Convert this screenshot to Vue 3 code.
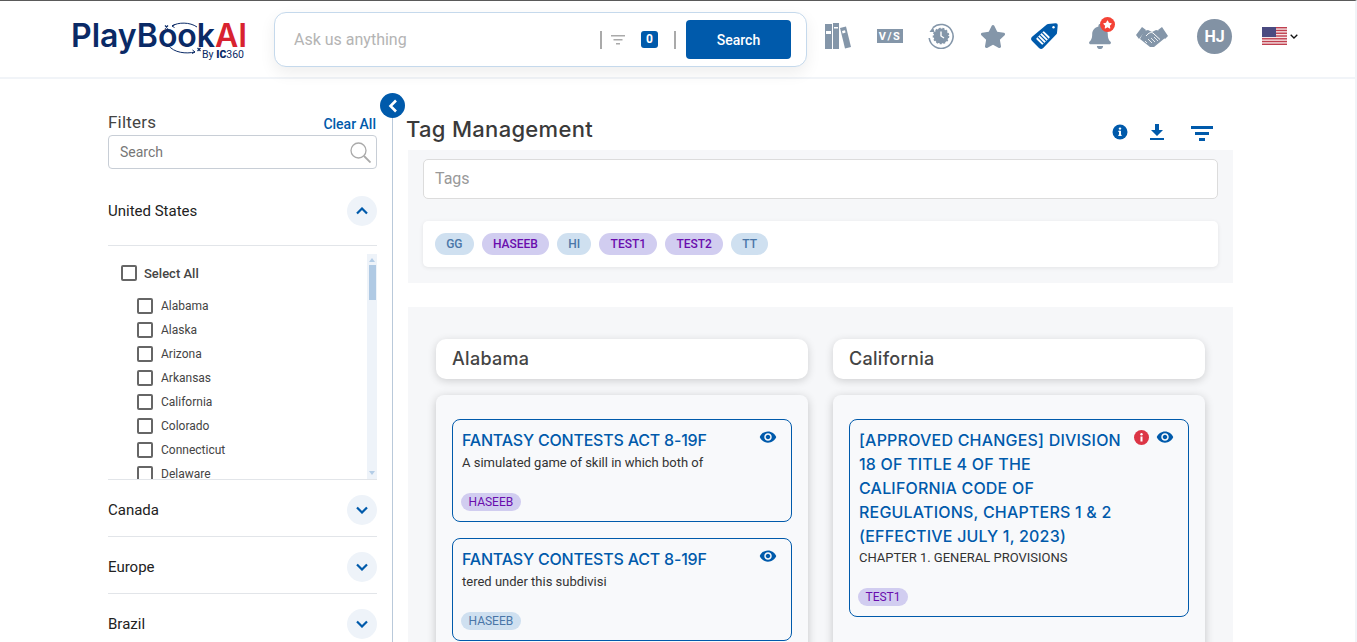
<script setup>
import { ref } from 'vue'

const states = ref(['Alabama', 'Alaska', 'Arizona', 'Arkansas', 'California', 'Colorado', 'Connecticut', 'Delaware'])
const regions = ref(['Canada', 'Europe', 'Brazil'])

const tags = ref([
  { name: 'GG', kind: 'blue' },
  { name: 'HASEEB', kind: 'purple' },
  { name: 'HI', kind: 'blue' },
  { name: 'TEST1', kind: 'purple' },
  { name: 'TEST2', kind: 'purple' },
  { name: 'TT', kind: 'blue' },
])

// === cards per state ===
const columns = ref([
  {
    state: 'Alabama',
    cards: [
      { lines: ['FANTASY CONTESTS ACT 8-19F'], desc: 'A simulated game of skill in which both of', tag: 'HASEEB', kind: 'purple' },
      { lines: ['FANTASY CONTESTS ACT 8-19F'], desc: 'tered under this subdivisi', tag: 'HASEEB', kind: 'blue' },
    ],
  },
  {
    state: 'California',
    cards: [
      {
        lines: ['[APPROVED CHANGES] DIVISION', '18 OF TITLE 4 OF THE', 'CALIFORNIA CODE OF', 'REGULATIONS, CHAPTERS 1 & 2', '(EFFECTIVE JULY 1, 2023)'],
        desc: 'CHAPTER 1. GENERAL PROVISIONS',
        tag: 'TEST1',
        kind: 'purple',
        alert: true,
      },
    ],
  },
])

const usStripes = [0, 1, 2, 3, 4, 5, 6]
</script>

<template>
  <div class="page">
    <header class="header">
      <div class="logo">
        <div class="logo-main">PlayBook<span class="logo-ai">AI</span></div>
        <svg class="logo-play" width="40" height="40" viewBox="0 0 40 40" fill="none" stroke="#0a2a66" stroke-width="1">
          <path d="M8 9C14 5 26 5 33 10" />
          <path d="M8 9l3-1.500M8 9l2.500 1.500" />
          <path d="M4 28C10 36 22 37 31 35" />
          <path d="M28.500 33l2.500 2-3 1.500" />
          <path d="M1 8.500l3 3M4 8.500l-3 3" stroke-width="1.200" />
          <path d="M33.500 31l3 3M36.500 31l-3 3" stroke-width="1.200" />
        </svg>
        <div class="logo-by">By <b>IC</b>360</div>
      </div>

      <div class="ask">
        <span class="ask-text">Ask us anything</span>
        <span class="ask-sep"></span>
        <svg class="ask-filter" width="14" height="12" viewBox="0 0 14 12" fill="#aaa">
          <rect y="1" width="14" height="1.500" />
          <rect x="2.500" y="5" width="9" height="1.500" />
          <rect x="5" y="9" width="4" height="1.500" />
        </svg>
        <span class="ask-count">0</span>
        <span class="ask-sep second"></span>
        <button class="ask-btn">Search</button>
      </div>

      <div class="icons">
        <svg width="26" height="26" viewBox="0 0 26 26" fill="#8496a9">
          <path d="M0 1h7v25H0zM8 0h6v26H8z" />
          <path d="M15 5l6-1.500L26 24l-6 1.500z" />
          <rect x="1" y="8" width="5" height="3" fill="#fff" />
          <rect x="9" y="4" width="4" height="1.500" fill="#fff" />
          <path d="M17 8l3-.8.6 2.400-3 .8z" fill="#fff" />
        </svg>
        <svg class="vs" width="26" height="14" viewBox="0 0 26 14">
          <rect width="26" height="14" fill="#8496a9" />
          <text x="13" y="11" text-anchor="middle" font-family="Roboto, sans-serif" font-size="11" font-weight="700" letter-spacing="1.500" fill="#fff">V/S</text>
        </svg>
        <svg width="26" height="26" viewBox="0 0 26 26" fill="none">
          <path d="M5 4.600A12 12 0 1 1 1.200 15" stroke="#8496a9" stroke-width="1.600" />
          <path d="M1.500 9l3.500-5 1.500 5z" fill="#8496a9" />
          <circle cx="13" cy="13" r="7.400" fill="#8496a9" stroke="#8496a9" stroke-width="1.800" stroke-dasharray="2 1.600" />
          <path d="M13 8.500V13l3 2" stroke="#fff" stroke-width="1.400" />
        </svg>
        <svg class="star" width="26" height="25" viewBox="0 0 576 512" fill="#8496a9">
          <path d="M259.3 17.8L194 150.2 47.9 171.5c-26.2 3.8-36.7 36.1-17.7 54.6l105.7 103-25 145.5c-4.5 26.3 23.2 46 46.4 33.7L288 439.6l130.7 68.7c23.2 12.2 50.9-7.4 46.4-33.7l-25-145.5 105.7-103c19-18.5 8.5-50.8-17.7-54.6L382 150.2 316.7 17.8c-11.7-23.6-45.6-23.9-57.4 0z" />
        </svg>
        <svg width="27" height="26" viewBox="0 0 27 26">
          <path d="M17 1 24.500.3a2 2 0 0 1 2.200 2.200L26 10a2 2 0 0 1-.6 1.200L12.200 24.900a3 3 0 0 1-4.200 0L1.100 18a3 3 0 0 1 0-4.200L15.800 1.600A2 2 0 0 1 17 1z" fill="#005aab" />
          <circle cx="22.500" cy="4.300" r="1.200" fill="#fff" />
          <g transform="rotate(-45 12 15)">
            <rect x="6.500" y="10.500" width="11" height="9" rx="1" fill="#fff" />
            <path d="M9 10.500v9M12 10.500v9M15 10.500v9" stroke="#005aab" stroke-width="1.200" />
          </g>
        </svg>
        <div class="bell">
          <svg width="22" height="25" viewBox="0 0 448 512" fill="#8496a9">
            <path d="M224 512c35.32 0 63.97-28.65 63.97-64H160.03c0 35.35 28.65 64 63.97 64zm215.39-149.71c-19.32-20.76-55.47-51.99-55.47-154.29 0-77.7-54.48-139.9-127.94-155.16V32c0-17.67-14.32-32-31.98-32s-31.98 14.33-31.98 32v20.84C118.56 68.1 64.08 130.3 64.08 208c0 102.3-36.15 133.53-55.47 154.29-6 6.45-8.66 14.16-8.61 21.71.11 16.4 12.98 32 32.1 32h383.8c19.12 0 32-15.6 32.1-32 .05-7.55-2.61-15.27-8.61-21.71z" />
          </svg>
          <span class="bell-dot">
            <svg width="9" height="9" viewBox="0 0 576 512" fill="#fff">
              <path d="M259.3 17.8L194 150.2 47.9 171.5c-26.2 3.8-36.7 36.1-17.7 54.6l105.7 103-25 145.5c-4.5 26.3 23.2 46 46.4 33.7L288 439.6l130.7 68.7c23.2 12.2 50.9-7.4 46.4-33.7l-25-145.5 105.7-103c19-18.5 8.5-50.8-17.7-54.6L382 150.2 316.7 17.8c-11.700-23.600-45.600-23.900-57.400 0z" />
            </svg>
          </span>
        </div>
        <svg class="shake" width="32" height="20" viewBox="0 0 32 20">
          <path d="M0 8 6 0l4 3-7 9zM26 0l6 9-3 3-7-9z" fill="#8496a9" />
          <path d="M8 4l4-1 4 2 4-2 5 1 4 7-11 9h-4L4 12z" fill="#8496a9" />
          <path d="M10 9c3-3.500 5-4 7-3l7 6.500" fill="none" stroke="#fff" stroke-width="1" />
          <path d="M9 14l2 2M12 12l4 4M15 11l4 4M18 10l4 4" fill="none" stroke="#fff" stroke-width=".8" />
        </svg>
        <div class="avatar">HJ</div>
        <div class="lang">
          <svg width="25" height="18" viewBox="0 0 25 18">
            <rect width="25" height="18" fill="#f4e4e6" />
            <rect v-for="s in usStripes" :key="s" y="0" :transform="`translate(0 ${s * 2.77})`" width="25" height="1.400" fill="#c0404f" />
            <rect width="14" height="10" fill="#4a4a80" />
          </svg>
          <svg class="lang-caret" width="8" height="5" viewBox="0 0 8 5" fill="none" stroke="#111" stroke-width="1.300">
            <path d="M.7.7 4 4 7.300.7" />
          </svg>
        </div>
      </div>
    </header>

    <div class="body">
      <aside class="sidebar">
        <button class="collapse">
          <svg width="10" height="14" viewBox="0 0 10 14" fill="none" stroke="#fff" stroke-width="2.600">
            <path d="M8 1.500 2.500 7 8 12.500" />
          </svg>
        </button>
        <div class="filter-head">
          <span class="filter-title">Filters</span>
          <a class="clear">Clear All</a>
        </div>
        <div class="filter-search">
          <span>Search</span>
          <svg width="21" height="21" viewBox="0 0 21 21" fill="none" stroke="#aaa" stroke-width="1.300">
            <circle cx="8.500" cy="8.500" r="7.500" />
            <path d="M14 14l6.500 6.500" stroke-width="1.800" />
          </svg>
        </div>

        <div class="region open">
          <span>United States</span>
          <span class="round">
            <svg width="12" height="8" viewBox="0 0 12 8" fill="none" stroke="#005aab" stroke-width="2.200">
              <path d="M1 6.500 6 1.500l5 5" />
            </svg>
          </span>
        </div>
        <div class="state-box">
          <div class="state-list">
            <label class="check all"><i></i>Select All</label>
            <label v-for="s in states" :key="s" class="check"><i></i>{{ s }}</label>
          </div>
          <div class="track">
            <span class="arrow up"></span>
            <span class="thumb"></span>
            <span class="arrow down"></span>
          </div>
        </div>
        <div v-for="r in regions" :key="r" class="region">
          <span>{{ r }}</span>
          <span class="round">
            <svg width="12" height="8" viewBox="0 0 12 8" fill="none" stroke="#005aab" stroke-width="2.200">
              <path d="M1 1.500 6 6.500l5-5" />
            </svg>
          </span>
        </div>
      </aside>

      <main class="main">
        <div class="title-row">
          <h1 class="title">Tag Management</h1>
          <div class="tools">
            <svg width="16" height="16" viewBox="0 0 16 16">
              <circle cx="8" cy="8" r="7.500" fill="#005aab" />
              <rect x="7" y="6.800" width="2" height="5" fill="#fff" />
              <rect x="6.200" y="10.800" width="3.600" height="1" fill="#fff" />
              <rect x="6.200" y="6.800" width="2" height="1" fill="#fff" />
              <circle cx="8" cy="4.600" r="1.200" fill="#fff" />
            </svg>
            <svg class="tool-dl" width="14" height="16" viewBox="0 0 14 16" fill="#005aab">
              <path d="M5 0h4v6h4L7 12 1 6h4zM0 14h14v2H0z" />
            </svg>
            <svg class="tool-filter" width="22" height="15" viewBox="0 0 22 15" fill="#005aab">
              <rect width="22" height="3" />
              <rect x="4" y="6" width="14" height="3" />
              <rect x="8" y="12" width="6" height="3" />
            </svg>
          </div>
        </div>

        <section class="tag-panel">
          <div class="tag-input">Tags</div>
          <div class="tag-list">
            <span v-for="t in tags" :key="t.name" class="chip big" :class="t.kind">{{ t.name }}</span>
          </div>
        </section>

        <section class="board">
          <div v-for="col in columns" :key="col.state" class="column">
            <div class="col-head">{{ col.state }}</div>
            <div class="col-body">
              <article v-for="(card, i) in col.cards" :key="i" class="card" :class="{ long: card.alert }">
                <div class="card-top">
                  <div class="card-title">
                    <div v-for="line in card.lines" :key="line">{{ line }}</div>
                  </div>
                  <div class="card-icons">
                    <svg v-if="card.alert" width="15" height="15" viewBox="0 0 15 15">
                      <circle cx="7.500" cy="7.500" r="7.500" fill="#dc3545" />
                      <rect x="6.500" y="6.500" width="2" height="5" fill="#fff" />
                      <circle cx="7.500" cy="4.300" r="1.200" fill="#fff" />
                    </svg>
                    <svg width="18" height="18" viewBox="0 0 24 24" fill="#005aab">
                      <path d="M12 4.500C7 4.500 2.730 7.610 1 12c1.730 4.390 6 7.500 11 7.500s9.270-3.110 11-7.500c-1.730-4.390-6-7.500-11-7.500zM12 17c-2.760 0-5-2.240-5-5s2.240-5 5-5 5 2.240 5 5-2.240 5-5 5zm0-8c-1.660 0-3 1.340-3 3s1.340 3 3 3 3-1.340 3-3-1.340-3-3-3z" />
                    </svg>
                  </div>
                </div>
                <p class="card-desc">{{ card.desc }}</p>
                <span class="chip small" :class="card.kind">{{ card.tag }}</span>
              </article>
            </div>
          </div>
        </section>
      </main>
    </div>
  </div>
</template>

<style>
html, body {
  margin: 0;
  overflow: hidden;
  background: #fff;
}
</style>

<style scoped>
.page {
  height: 642px;
  overflow: hidden;
  border-top: 1px solid #5a5a5a;
  border-right: 2px solid #f1f4f8;
  box-sizing: border-box;
  font-family: Roboto, sans-serif;
  color: #222;
}

/* header */
.header {
  height: 76px;
  border-bottom: 2px solid #f1f4f8;
  display: flex;
  align-items: flex-start;
  padding-left: 71px;
}
.logo {
  position: relative;
  width: 175px;
  height: 38px;
  margin-top: 21px;
  margin-right: 28px;
}
.logo-main {
  font-family: Inter, sans-serif;
  font-weight: 600;
  font-size: 32px;
  line-height: 28px;
  color: #0a2a66;
}
.logo-ai {
  color: #d8232f;
}
.logo-play {
  position: absolute;
  left: 93px;
  top: -5px;
}
.logo-by {
  position: absolute;
  right: 2px;
  top: 28px;
  font-size: 10.500px;
  line-height: 10px;
  color: #0a2a66;
}
.logo-by b {
  font-weight: 900;
}
.ask {
  width: 533px;
  height: 55px;
  margin-top: 11px;
  box-sizing: border-box;
  border: 1px solid #c5d9ec;
  border-radius: 12px;
  box-shadow: 0 6px 16px rgba(0, 0, 0, 0.07);
  display: flex;
  align-items: center;
  padding: 0 15px 0 19px;
  background: #fff;
}
.ask-text {
  font-size: 16px;
  color: #b4b4b4;
  flex: 1;
}
.ask-sep {
  width: 2px;
  height: 18px;
  background: #aaa;
}
.ask-sep.second {
  margin: 0 10px 0 16px;
}
.ask-filter {
  margin: 0 16px 0 9px;
}
.ask-count {
  width: 17px;
  height: 17px;
  border-radius: 3px;
  background: #005aab;
  color: #fff;
  font-size: 12px;
  font-weight: 700;
  text-align: center;
  line-height: 17px;
}
.ask-btn {
  width: 105px;
  height: 39px;
  border: none;
  border-radius: 4px;
  background: #005aab;
  color: #fff;
  font-family: Roboto, sans-serif;
  font-size: 14px;
  font-weight: 500;
}
.icons {
  display: flex;
  align-items: center;
  gap: 25px;
  height: 26px;
  margin-top: 22px;
  margin-left: 18px;
}
.vs,
.star {
  margin-left: 1px;
}
.bell {
  position: relative;
  height: 25px;
  margin-left: 6px;
}
.bell svg {
  display: block;
}
.bell-dot {
  position: absolute;
  left: 11px;
  top: -7px;
  width: 15px;
  height: 15px;
  border-radius: 50%;
  background: #f44336;
  display: flex;
  align-items: center;
  justify-content: center;
}
.shake {
  margin-top: 2px;
}
.avatar {
  width: 35px;
  height: 35px;
  flex: none;
  margin-left: 4px;
  border-radius: 50%;
  background: #8292a4;
  color: #fff;
  font-weight: 700;
  font-size: 16px;
  text-align: center;
  line-height: 35px;
}
.lang {
  display: flex;
  align-items: center;
  gap: 3px;
  margin-left: 5px;
}

/* left filters */
.body {
  display: flex;
  align-items: flex-start;
}
.sidebar {
  position: relative;
  width: 269px;
  height: 560px;
  flex: none;
  margin-top: 14px;
  margin-left: 108px;
  padding-top: 14px;
  padding-right: 15px;
  border-right: 1px solid #b9c9da;
}
.collapse {
  position: absolute;
  right: -13px;
  top: 0;
  width: 25px;
  height: 25px;
  padding: 0;
  border: none;
  border-radius: 50%;
  background: #005aab;
  display: flex;
  align-items: center;
  justify-content: center;
}
.filter-head {
  display: flex;
  justify-content: space-between;
  align-items: flex-end;
  height: 28px;
  padding-top: 1px;
  padding-bottom: 1px;
  box-sizing: border-box;
}
.filter-title {
  font-size: 17px;
  letter-spacing: 0.2px;
  color: #444;
  line-height: 24px;
}
.clear {
  font-size: 14px;
  font-weight: 500;
  color: #005aab;
  line-height: 20px;
  margin-right: 1px;
}
.filter-search {
  height: 34px;
  box-sizing: border-box;
  border: 1px solid #c8ced6;
  border-radius: 4px;
  display: flex;
  align-items: center;
  justify-content: space-between;
  padding: 0 5px 0 11px;
  font-size: 14px;
  color: #777;
}
.region {
  height: 57px;
  box-sizing: border-box;
  padding-top: 4px;
  display: flex;
  align-items: center;
  justify-content: space-between;
  border-bottom: 1px solid #e2e5e9;
  font-size: 15px;
  color: #222;
}
.region.open {
  height: 77px;
  padding-top: 8px;
}
.round {
  width: 30px;
  height: 30px;
  border-radius: 50%;
  background: #eef3f9;
  display: flex;
  align-items: center;
  justify-content: center;
}
.state-box {
  display: flex;
  height: 234px;
  box-sizing: border-box;
  padding-top: 8px;
  border-bottom: 1px solid #e2e5e9;
  overflow: hidden;
}
.state-list {
  flex: 1;
  padding: 7px 0 0 13px;
}
.check {
  display: flex;
  align-items: center;
  height: 24px;
  margin-left: 16px;
  font-size: 12px;
  color: #444;
}
.check.all {
  margin-left: 0;
  margin-bottom: 9px;
  font-weight: 500;
  font-size: 13px;
}
.check i {
  width: 16px;
  height: 16px;
  box-sizing: border-box;
  border: 2px solid #666;
  border-radius: 2px;
  margin-right: 8px;
  flex: none;
}
.check.all i {
  margin-right: 7px;
}
.track {
  width: 10px;
  background: #eef3f9;
  position: relative;
  display: flex;
  flex-direction: column;
  align-items: center;
}
.arrow {
  position: absolute;
  width: 0;
  height: 0;
  border-left: 3px solid transparent;
  border-right: 3px solid transparent;
}
.arrow.up {
  top: 4px;
  border-bottom: 4px solid #b4cde6;
}
.arrow.down {
  bottom: 4px;
  border-top: 4px solid #b4cde6;
}
.thumb {
  width: 7px;
  height: 35px;
  margin-top: 11px;
  background: #b0cae4;
}

/* right content */
.main {
  width: 825px;
  flex: none;
  margin-left: 15px;
  padding-top: 37px;
}
.title-row {
  display: flex;
  justify-content: space-between;
  height: 34px;
}
.title {
  margin: 0 0 0 -2px;
  font-family: Inter, sans-serif;
  font-size: 22px;
  font-weight: 500;
  letter-spacing: 0.3px;
  line-height: 26px;
  color: #3a3a3a;
}
.tools {
  display: flex;
  align-items: center;
  height: 20px;
  margin-top: 6px;
  margin-right: 20px;
}
.tool-dl {
  margin-left: 22px;
}
.tool-filter {
  margin-left: 27px;
  margin-top: 3px;
}
.tag-panel {
  height: 133px;
  box-sizing: border-box;
  background: #f6f7f9;
  padding: 9px 15px;
}
.tag-input {
  height: 40px;
  box-sizing: border-box;
  border: 1px solid #dcdcdc;
  border-radius: 5px;
  background: #fff;
  padding-left: 11px;
  font-size: 16px;
  line-height: 38px;
  color: #999;
}
.tag-list {
  height: 46px;
  margin-top: 22px;
  box-sizing: border-box;
  padding: 12px;
  background: #fff;
  border-radius: 5px;
  box-shadow: 0 1px 4px rgba(0, 0, 0, 0.08);
  display: flex;
  gap: 8px;
}
.chip {
  display: inline-block;
  border-radius: 11px;
  font-size: 12px;
  text-align: center;
}
.chip.big {
  height: 22px;
  line-height: 22px;
  padding: 0 11.200px;
  font-weight: 500;
}
.chip.small {
  height: 18px;
  line-height: 18px;
  padding: 0 7.500px;
  border-radius: 9px;
  margin-left: -1px;
}
.chip.blue {
  background: #cfe0f0;
  color: #4a76a8;
}
.chip.purple {
  background: #d1cdf0;
  color: #6a0dad;
}
.board {
  margin-top: 24px;
  height: 400px;
  background: #f6f7f9;
  padding: 32px 28px;
  box-sizing: border-box;
  display: flex;
  gap: 25px;
}
.column {
  width: 372px;
  flex: none;
}
.col-head {
  height: 40px;
  border-radius: 10px;
  background: #fff;
  box-shadow: 0 2px 8px rgba(0, 0, 0, 0.16);
  padding-left: 16px;
  font-family: Inter, sans-serif;
  font-size: 18px;
  font-weight: 500;
  letter-spacing: 0.3px;
  line-height: 40px;
  color: #444;
}
.col-body {
  margin-top: 16px;
  height: 400px;
  box-sizing: border-box;
  padding: 24px 16px;
  border-radius: 8px;
  background: #f8f9fb;
  box-shadow: 0 2px 10px rgba(0, 0, 0, 0.2);
  display: flex;
  flex-direction: column;
  gap: 16px;
}
.card {
  border: 1px solid #005aab;
  border-radius: 8px;
  padding: 8px 9px 10px;
  height: 103px;
  box-sizing: border-box;
  flex: none;
}
.card.long {
  height: 198px;
}
.card-top {
  display: flex;
  justify-content: space-between;
  align-items: flex-start;
  margin-bottom: 1px;
}
.card.long .card-top {
  margin-bottom: 0;
}
.card-title {
  font-family: Inter, sans-serif;
  font-size: 16px;
  font-weight: 500;
  letter-spacing: -0.2px;
  line-height: 24px;
  color: #005aab;
  white-space: nowrap;
}
.card.long .card-title {
  letter-spacing: 0.2px;
}
.card-icons {
  display: flex;
  align-items: center;
  gap: 7px;
  margin-right: 5px;
}
.card-desc {
  margin: 0 0 18px;
  font-size: 13px;
  line-height: 20px;
  color: #333;
}
</style>
